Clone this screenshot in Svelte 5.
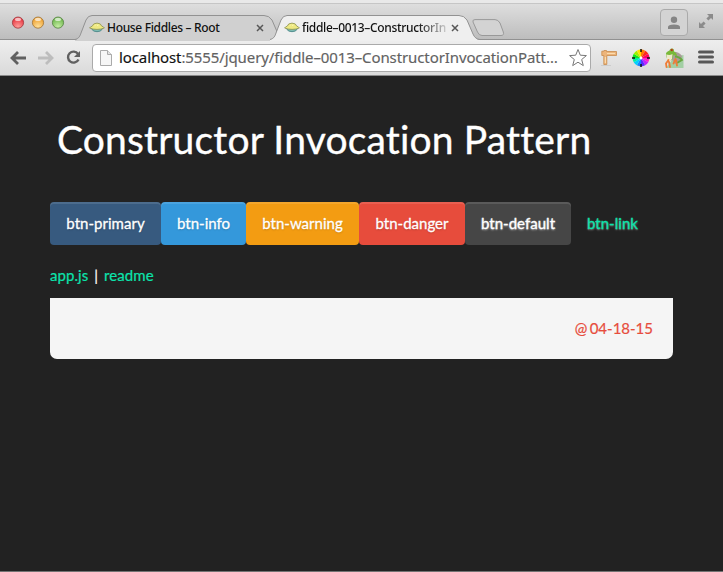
<script>
  const buttons = ['primary', 'info', 'warning', 'danger', 'default', 'link'];
  const lights = [
    ['#e9424b', '#ff9f9b', '#9a3036'],
    ['#efa73c', '#ffe09a', '#9b6c2c'],
    ['#78bd57', '#c5eda4', '#4c7b3a']
  ];
  const tabs = [
    { title: 'House Fiddles – Root', active: false },
    { title: 'fiddle–0013–ConstructorIn', active: true }
  ];
  const wedge = (i) => {
    const a = (i * Math.PI) / 6;
    const b = ((i + 1) * Math.PI) / 6;
    return `M9 9L${9 + 8.4 * Math.sin(a)} ${9 - 8.4 * Math.cos(a)}A8.4 8.4 0 0 1 ${9 + 8.4 * Math.sin(b)} ${9 - 8.4 * Math.cos(b)}Z`;
  };
  const wheel = ['#ff7a00', '#ff2a18', '#ff0060', '#ff20c8', '#c020ff', '#5a28ff', '#1684ff', '#00d0ff', '#00f0a0', '#10e820', '#a0f000', '#ffe000'];
</script>

<div class="window">
  <header class="strip">
    <div class="lights">
      {#each lights as [base, glow, edge], i}
        <svg width="14" height="14" viewBox="0 0 14 14">
          <defs>
            <radialGradient id="light{i}" cx=".5" cy=".85" r=".65"><stop stop-color={glow} /><stop offset="1" stop-color={base} /></radialGradient>
          </defs>
          <circle cx="7" cy="6.6" r="5.6" fill="url(#light{i})" stroke={edge} stroke-opacity=".75" />
          <ellipse cx="7" cy="3.4" rx="3" ry="1.6" fill="#fff" opacity=".65" />
        </svg>
      {/each}
    </div>
    <nav class="tabs">
      {#each tabs as tab}
        <div class="tab" class:active={tab.active}>
          <svg class="shape" width="211" height="26" viewBox="0 0 211 26">
            <path class="fill" d="M0 25C4 24 5 21 6 18L11 5Q13 .5 17 .5H189Q194 .5 197 5L203 19Q205 24.5 210 25V26H0Z" />
            <path class="line" d="M0 24.5C4 23.5 5 21 6 18L11 5Q13 .5 17 .5H189Q194 .5 197 5L203 19Q205 24 210 24.5" />
          </svg>
          <svg class="pie" width="16" height="11" viewBox="0 0 16 11">
            <path d="M2 6L4.5 9Q8 10.4 11.5 9L14 6Z" fill="#7fbcb4" stroke="#3f7f80" stroke-width=".8" />
            <path d="M.6 6Q1.4 4.6 3.2 4.2Q4 1.2 8 1.1Q12 1.2 12.8 4.2Q14.6 4.6 15.4 6Q12.5 7.4 8 7.4Q3.5 7.4 .6 6Z" fill="#eee982" stroke="#8a8f52" stroke-width=".8" />
            <path d="M6 3.6L6.8 2.6M8.6 4L9 2.6" stroke="#fffdc8" stroke-width=".8" />
          </svg>
          <span class="title">{tab.title}</span>
          <svg class="close" width="8" height="8" viewBox="0 0 8 8"><path d="M1 1L7 7M7 1L1 7" stroke="#575757" stroke-width="1.5" /></svg>
        </div>
      {/each}
      <svg class="newtab" width="33" height="18" viewBox="0 0 33 18">
        <path d="M3 .6H23Q26 .6 28 4L31.3 13Q32.3 16.5 29 16.5H10Q7 16.5 5.5 13L1 3Q.3 .6 3 .6Z" fill="#d3d3d3" stroke="#999" />
      </svg>
    </nav>
    <div class="profile">
      <svg width="14" height="14" viewBox="0 0 14 14" fill="#858585"><circle cx="7" cy="3.8" r="3.2" /><path d="M1 13V11Q1 8.5 7 8.5T13 11V13Z" /></svg>
    </div>
    <svg class="expand" width="16" height="16" viewBox="0 0 16 16" fill="#8b8b8b">
      <path d="M9 1H15V7L13 5L10.4 7.6L8.4 5.6L11 3ZM1 9L3 11L5.6 8.4L7.6 10.4L5 13L7 15H1Z" />
    </svg>
  </header>

  <div class="toolbar">
    <svg class="back" width="17" height="14" viewBox="0 0 17 14"><path d="M8 1L2 7L8 13M2.5 7H16" fill="none" stroke="#606060" stroke-width="2.8" /></svg>
    <svg class="forward" width="17" height="14" viewBox="0 0 17 14"><path d="M9 1L15 7L9 13M14.5 7H1" fill="none" stroke="#bdbdbd" stroke-width="2.8" /></svg>
    <svg class="reload" width="15" height="15" viewBox="0 0 15 15"><path d="M12 3.9A5.5 5.5 0 1 0 12.5 9.5" fill="none" stroke="#606060" stroke-width="2.4" /><path d="M14 1V7H8Z" fill="#606060" /></svg>
    <div class="address">
      <svg class="page" width="12" height="16" viewBox="0 0 12 16"><path d="M.5 .5H7.5L11.5 4.5V15.5H.5Z" fill="#f6f6f6" stroke="#aaa" /><path d="M7.5 .5V4.5H11.5" fill="#e3e3e3" stroke="#aaa" /></svg>
      <span class="url"><b>localhost</b>:5555/jquery/fiddle–0013–ConstructorInvocationPatt…</span>
      <svg class="star" width="20" height="20" viewBox="0 0 20 20"><path d="M10 1.5L12.3 7.2L18.4 7.6L13.7 11.5L15.3 17.6L10 14.2L4.7 17.6L6.3 11.5L1.6 7.6L7.7 7.2Z" fill="#fff" stroke="#777" /></svg>
    </div>
    <div class="extensions">
      <svg width="17" height="18" viewBox="0 0 17 18">
        <path d="M0 16.5H10" stroke="#ccc" /><path d="M.8 2.2H3V1.5H5.5V2.5H15.5V6.5H5.8V15.5H2.8V6.5H.8Z" fill="#edb57b" stroke="#c98c4c" stroke-width=".8" /><path d="M6 4.5H14M4.4 8V14" stroke="#fbdcae" stroke-width="1.2" />
      </svg>
      <svg width="18" height="18" viewBox="0 0 18 18">
        {#each wheel as color, i}<path d={wedge(i)} fill={color} />{/each}
        <circle cx="9" cy="9" r="1.4" fill="#fff" /><path d="M9 0V3M9 15V18M0 9H3M15 9H18" stroke="#111" stroke-width="1.5" />
      </svg>
      <svg width="20" height="20" viewBox="0 0 20 20">
        <path d="M3 19L10 9L19.5 7V20H3Z" fill="#a2cfa4" />
        <path d="M8 4Q14 3 18 8L17 13L11 16L7 10Z" fill="#a99d98" />
        <path d="M2 5Q3.5 3 5.5 2.5Q6 0 8.5 .5Q10.5 1 10 3.5Q13 5 13 8L9.5 7L8 12L4 13L2.5 9Z" fill="#78b93a" />
        <path d="M2.5 6.5Q6 7.5 8.5 6L8 11L5 14L3 11Z" fill="#eee9c8" />
        <circle cx="7.8" cy="2" r="1.3" fill="#d64a20" /><circle cx="7.8" cy="2" r=".5" fill="#222" />
        <path d="M11 8.5Q16 9 18 12L13 15" fill="none" stroke="#68a83f" stroke-width="1.8" />
        <path d="M4.5 12L2 15.5L2.5 19M5 14L6 19M11.5 11L9.5 15.5M12 12L13 17.5" fill="none" stroke="#ee7c36" stroke-width="1.8" stroke-linecap="round" />
      </svg>
    </div>
    <svg class="menu" width="16" height="15" viewBox="0 0 16 15"><path d="M1.5 2H14.5M1.5 7H14.5M1.5 12H14.5" stroke="#585858" stroke-width="3" stroke-linecap="round" /></svg>
  </div>

  <main>
    <h1>Constructor Invocation Pattern</h1>
    <div class="buttons">
      {#each buttons as kind}<button class="btn {kind}">btn-{kind}</button>{/each}
    </div>
    <p><a href="#app">app.js</a><span>|</span><a href="#readme">readme</a></p>
    <footer>@ 04-18-15</footer>
  </main>
</div>

<style>
  :global(body) { background: #222; }
  * { box-sizing: border-box; }
  svg { flex: none; }
  .window { height: 572px; background: #222; border-bottom: 1px solid #737373; overflow: hidden; display: flex; flex-direction: column; font-family: Lato, sans-serif; font-variant-ligatures: none; }
  .strip { height: 40px; flex: none; display: flex; align-items: flex-start; background: linear-gradient(#e9e9e9 0 3px, #c6c6c6 3px 4px, #dedede 4px, #bdbdbd 39px, #919191 39px); }
  .lights { width: 75px; flex: none; display: flex; gap: 6px; padding: 16px 0 0 11px; }
  .tabs { display: flex; width: 585px; padding-top: 15px; }
  .tab { position: relative; width: 195px; height: 25px; display: flex; align-items: center; padding-left: 14px; font: 500 12px/20px "Noto Sans", sans-serif; color: #111; }
  .shape { position: absolute; left: 0; top: 0; }
  .fill { fill: #d0d0d0; }
  .line { fill: none; stroke: #929292; }
  .active { z-index: 1; }
  .active .fill { fill: #efefef; }
  .pie, .title, .close { position: relative; }
  .title { width: 145px; margin-left: 2px; white-space: nowrap; letter-spacing: -.33px; }
  .active .title { mask-image: linear-gradient(90deg, #000 115px, transparent 150px); }
  .close { margin-left: 4px; }
  .newtab { margin: 4px 0 0 7px; }
  .profile { width: 28px; height: 27px; margin-top: 9px; border: 1px solid #aaa; border-radius: 4px; display: grid; place-items: center; background: #d3d3d3; }
  .expand { margin: 13px 0 0 10px; }
  .toolbar { height: 36px; flex: none; display: flex; align-items: center; padding: 0 0 1px 10px; background: linear-gradient(#eee, #dadada 35px, #8a8a8a 35px); }
  .forward { margin-left: 10px; }
  .reload { margin-left: 12px; }
  .address { width: 499px; height: 28px; margin-left: 11px; padding: 0 1px 0 7px; display: flex; align-items: center; background: #fff; border: 1px solid #aaa; border-radius: 4px; }
  .url { width: 442px; margin-left: 7px; padding-bottom: 2px; font: 15px/20px "Noto Sans", sans-serif; letter-spacing: -.105px; color: #626262; white-space: nowrap; -webkit-text-stroke: .15px; }
  .url b { font-weight: 400; color: #111; }
  .star { margin-left: 7px; }
  .extensions { width: 83px; display: flex; justify-content: space-between; align-items: center; margin-left: 10px; }
  .menu { margin-left: 14px; }
  main { padding: 39px 50px 0; -webkit-text-stroke: .2px; }
  h1 { margin: 0 0 38px 7px; font-size: 39px; line-height: 49px; font-weight: 400; letter-spacing: .17px; color: #fff; white-space: nowrap; -webkit-text-stroke: .35px; }
  .buttons { display: flex; }
  .btn { height: 43px; flex: none; padding: 0 16px; border: 0; border-radius: 4px; font: 15px/43px Lato, sans-serif; font-variant-ligatures: none; color: #fff; -webkit-text-stroke: .3px; letter-spacing: .02px; text-shadow: 0 1px 2px #0003; box-shadow: inset 0 2px 0 #ffffff1c; white-space: nowrap; }
  .primary { width: 111px; background: #375a7f; }
  .info { width: 85px; background: #3498db; }
  .warning { width: 113px; background: #f39c12; }
  .danger { width: 106px; background: #e74c3c; }
  .default { width: 106px; background: #464646; text-shadow: 0 1px 2px #fff9; }
  .link { background: none; box-shadow: none; color: #0ce3ac; text-shadow: 0 1px 2px #fff7; }
  p { margin: 20px 0 12px; font-size: 15px; line-height: 21px; letter-spacing: .06px; color: #fff; }
  p span { margin: 0 6px; }
  a { color: #0ce3ac; text-decoration: none; }
  footer { height: 61px; padding-right: 20px; background: #f5f5f5; border-radius: 0 0 7px 7px; color: #e74c3c; font-size: 15px; line-height: 61px; text-align: right; word-spacing: -1.5px; }
</style>
